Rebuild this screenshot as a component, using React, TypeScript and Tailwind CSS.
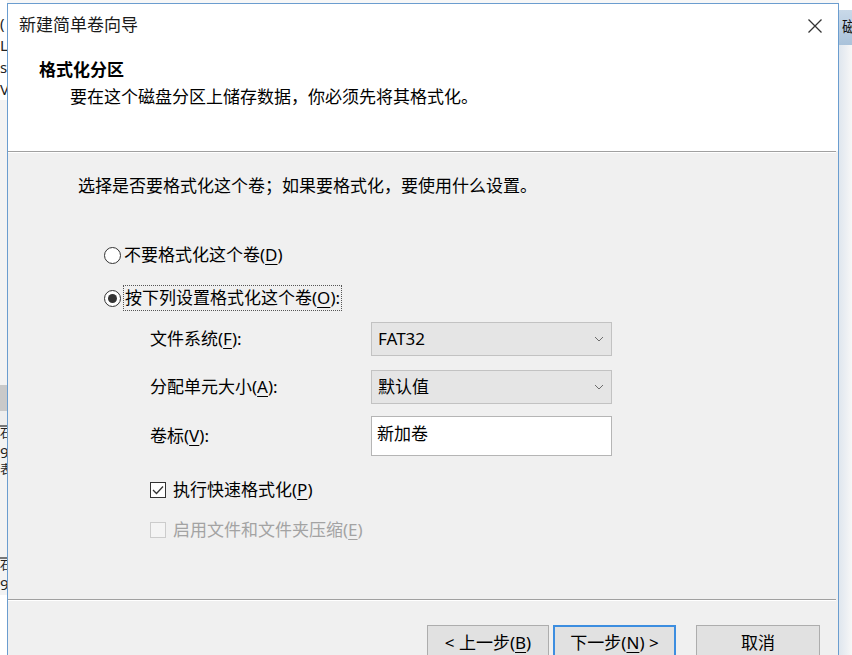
import React from "react";

const FONT = { fontFamily: '"Noto Sans", "Noto Sans CJK SC", sans-serif' };

function U({ children }: { children: React.ReactNode }) {
  return <span className="underline underline-offset-[3px] decoration-1">{children}</span>;
}

function Chevron() {
  return (
    <svg width="10" height="6" viewBox="0 0 10 6" className="text-[#6d6d6d]">
      <path d="M1 1 L5 5 L9 1" fill="none" stroke="currentColor" strokeWidth="1" />
    </svg>
  );
}

function Radio({ checked }: { checked?: boolean }) {
  return (
    <span className="w-[17px] h-[17px] rounded-full border-[1.5px] border-[#333] bg-white flex items-center justify-center shrink-0">
      {checked && <span className="w-[9px] h-[9px] rounded-full bg-[#333]" />}
    </span>
  );
}

function Check({ checked, disabled }: { checked?: boolean; disabled?: boolean }) {
  return (
    <span
      className={
        "w-[16px] h-[16px] flex items-center justify-center shrink-0 " +
        (disabled ? "border border-[#cccccc] bg-[#f4f4f4]" : "border-[1.5px] border-[#333] bg-white")
      }
    >
      {checked && (
        <svg width="12" height="10" viewBox="0 0 12 10">
          <path d="M1 5 L4.5 8.5 L11 1.5" fill="none" stroke="#333" strokeWidth="1.3" />
        </svg>
      )}
    </span>
  );
}

export default function App() {
  return (
    <div className="w-[852px] h-[655px] overflow-hidden bg-[#f7f7f7] flex" style={FONT}>
      {/* left background strip */}
      <div className="w-[7px] shrink-0 flex flex-col bg-white text-[15px] leading-[22px] text-[#222] overflow-hidden">
        <div className="h-[12px]" />
        <div>(</div>
        <div>L</div>
        <div>s</div>
        <div>V</div>
        <div className="h-[285px] bg-[#f3f3f3]" />
        <div className="h-[26px] bg-[#c9c9c9]" />
        <div className="h-[14px] bg-[#eeeeee]" />
        <div className="h-[2px] bg-[#777]" />
        <div className="text-[12px] leading-[14px] bg-[#f3f3f3]">石</div>
        <div className="bg-[#f3f3f3]">9</div>
        <div className="text-[12px] leading-[14px] bg-[#f3f3f3]">表</div>
        <div className="h-[80px] bg-[#f3f3f3]" />
        <div className="h-[2px] bg-[#777]" />
        <div className="text-[12px] leading-[14px] bg-[#f3f3f3]">石</div>
        <div className="bg-[#f3f3f3]">9</div>
      </div>

      {/* dialog */}
      <div className="mt-[3px] w-[832px] h-[700px] shrink-0 border border-[#6b9dcf] bg-[#f0f0f0] flex flex-col text-black">
        <div className="h-[147px] bg-white flex flex-col relative">
          <div className="pt-[9px] pl-[11px] text-[17px] leading-[24px] text-[#1a1a1a]">新建简单卷向导</div>
          <div className="absolute right-[15px] top-[14px]">
            <svg width="16" height="16" viewBox="0 0 16 16">
              <path d="M1.5 1.5 L14.5 14.5 M14.5 1.5 L1.5 14.5" stroke="#333" strokeWidth="1.3" fill="none" />
            </svg>
          </div>
          <div className="mt-[21px] pl-[31px] text-[17px] leading-[24px] font-bold">格式化分区</div>
          <div className="mt-[3px] pl-[62px] text-[17px] leading-[24px]">要在这个磁盘分区上储存数据，你必须先将其格式化。</div>
        </div>
        <div className="h-px bg-[#a0a0a0] mr-[2px]" />
        <div className="h-px bg-white mr-[2px]" />

        <div className="flex flex-col text-[17px] leading-[24px]">
          <div className="mt-[21px] pl-[70px] h-[24px]">选择是否要格式化这个卷；如果要格式化，要使用什么设置。</div>

          <div className="mt-[45px] pl-[96px] h-[24px] flex items-center gap-[3px]">
            <Radio />
            <span>
              不要格式化这个卷(<U>D</U>)
            </span>
          </div>

          <div className="mt-[18px] pl-[96px] h-[26px] flex items-center gap-[2px]">
            <Radio checked />
            <span className="border border-dotted border-[#555] px-[1px] h-[26px] flex items-center">
              按下列设置格式化这个卷(<U>O</U>):
            </span>
          </div>

          <div className="mt-[11px] pl-[142px] h-[34px] flex items-center">
            <div className="w-[221px]">
              文件系统(<U>F</U>):
            </div>
            <div className="w-[241px] h-[34px] bg-[#e5e5e5] border border-[#c2c2c2] flex items-center justify-between pl-[6px] pr-[7px]">
              <span>FAT32</span>
              <Chevron />
            </div>
          </div>

          <div className="mt-[14px] pl-[142px] h-[34px] flex items-center">
            <div className="w-[221px]">
              分配单元大小(<U>A</U>):
            </div>
            <div className="w-[241px] h-[34px] bg-[#e5e5e5] border border-[#c2c2c2] flex items-center justify-between pl-[6px] pr-[7px]">
              <span>默认值</span>
              <Chevron />
            </div>
          </div>

          <div className="mt-[12px] pl-[142px] h-[40px] flex items-center">
            <div className="w-[221px]">
              卷标(<U>V</U>):
            </div>
            <div className="w-[241px] h-[40px] bg-white border border-[#b5b5b5] pl-[5px] pt-[5px]">新加卷</div>
          </div>

          <div className="mt-[22px] pl-[142px] h-[24px] flex items-center gap-[7px]">
            <Check checked />
            <span>
              执行快速格式化(<U>P</U>)
            </span>
          </div>

          <div className="mt-[16px] pl-[142px] h-[24px] flex items-center gap-[7px] text-[#a3a3a3]">
            <Check disabled />
            <span>
              启用文件和文件夹压缩(<U>E</U>)
            </span>
          </div>

          <div className="mt-[57px] h-px bg-[#a0a0a0] mr-[2px]" />
          <div className="h-px bg-white mr-[2px]" />

          <div className="mt-[24px] flex justify-end pr-[18px] text-[17px]">
            <div className="w-[122px] h-[36px] bg-[#e1e1e1] border border-[#adadad] flex items-center justify-center">
              &lt; 上一步(<U>B</U>)
            </div>
            <div className="ml-[4px] w-[123px] h-[36px] bg-[#e1e1e1] border-2 border-[#3d8ee0] flex items-center justify-center">
              下一步(<U>N</U>) &gt;
            </div>
            <div className="ml-[20px] w-[124px] h-[36px] bg-[#e1e1e1] border border-[#adadad] flex items-center justify-center">
              取消
            </div>
          </div>
        </div>
      </div>

      {/* right background strip */}
      <div className="flex-1 flex flex-col overflow-hidden">
        <div className="h-[10px] bg-white" />
        <div className="h-[35px] bg-gradient-to-b from-[#c9d9e9] to-[#a9c2da] pl-[3px] text-[15px] leading-[32px] text-[#111] whitespace-nowrap">磁</div>
        <div className="flex-1 bg-gradient-to-r from-[#dfe6ee] to-[#f7f7f7]" />
      </div>
    </div>
  );
}
